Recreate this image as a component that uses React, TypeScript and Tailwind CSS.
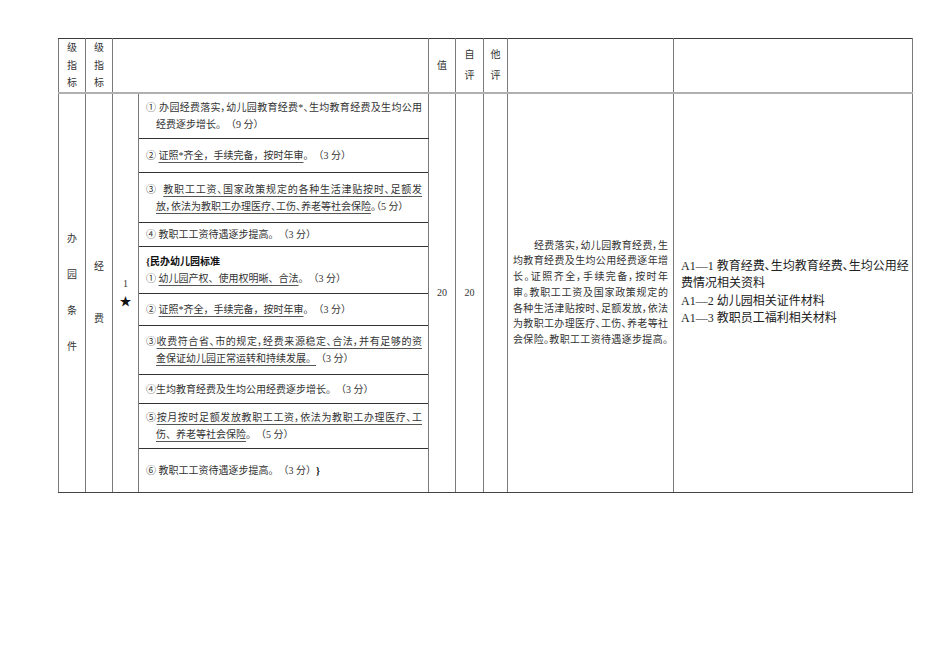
import React from "react";

const G = "border-l border-r border-t border-b border-l-[#7a7a7a] border-r-[#7a7a7a]";
const HD = `${G} border-t-[#3a3a3a] border-b-2 border-b-[#b0b0b0] p-0 align-middle text-center`;
const BD = `${G} border-b-[#444] p-0 align-middle`;
const SUB = `${G} border-t-[#333] border-b-[#333] pl-[7px] pr-[6px] py-0 align-middle leading-[17px] text-[10px]`;
const U = "underline underline-offset-[3px] decoration-[#555]";
const J = "whitespace-nowrap [text-align-last:justify] text-justify [font-feature-settings:'palt']";
const L = "whitespace-nowrap";
const L2 = "whitespace-nowrap pl-[10px]";

export default function App() {
  return (
    <div className="w-[950px] h-[672px] bg-white pt-[38px] pl-[58px] font-['Liberation_Serif','Noto_Sans_CJK_SC',serif] text-[#333] [text-spacing-trim:space-all]">
      <table className="border-collapse table-fixed w-[854px] text-[10px]">
        <colgroup>
          <col className="w-[27px]" />
          <col className="w-[27px]" />
          <col className="w-[26px]" />
          <col className="w-[290px]" />
          <col className="w-[27px]" />
          <col className="w-[28px]" />
          <col className="w-[24px]" />
          <col className="w-[166px]" />
          <col className="w-[239px]" />
        </colgroup>
        <tbody>
          <tr className="h-[53px]">
            <td className={HD}>
              <div className="flex flex-col items-center leading-[17.5px]">
                <span>级</span>
                <span>指</span>
                <span>标</span>
              </div>
            </td>
            <td className={HD}>
              <div className="flex flex-col items-center leading-[17.5px]">
                <span>级</span>
                <span>指</span>
                <span>标</span>
              </div>
            </td>
            <td className={HD} colSpan={2}></td>
            <td className={HD}>值</td>
            <td className={HD}>
              <div className="flex flex-col items-center leading-[21px]">
                <span>自</span>
                <span>评</span>
              </div>
            </td>
            <td className={HD}>
              <div className="flex flex-col items-center leading-[21px]">
                <span>他</span>
                <span>评</span>
              </div>
            </td>
            <td className={HD}></td>
            <td className={HD}></td>
          </tr>

          <tr className="h-[46px]">
            <td className={BD} rowSpan={10}>
              <div className="flex flex-col items-center gap-[22px] leading-[14px]">
                <span>办</span>
                <span>园</span>
                <span>条</span>
                <span>件</span>
              </div>
            </td>
            <td className={BD} rowSpan={10}>
              <div className="flex flex-col items-center gap-[38px] leading-[14px]">
                <span>经</span>
                <span>费</span>
              </div>
            </td>
            <td className={BD} rowSpan={10}>
              <div className="flex flex-col items-center leading-[19px]">
                <span>1</span>
                <span className="text-[12px] text-[#111]">★</span>
              </div>
            </td>
            <td className={SUB}>
              <div className={J}>① 办园经费落实，幼儿园教育经费*、生均教育经费及生均公用</div>
              <div className={L2}>经费逐步增长。（9 分）</div>
            </td>
            <td className={`${BD} text-center`} rowSpan={10}>20</td>
            <td className={`${BD} text-center`} rowSpan={10}>20</td>
            <td className={BD} rowSpan={10}></td>
            <td className={`${BD} px-[5px] text-[10px] leading-[15.7px]`} rowSpan={10}>
              <div className={`${J} pl-[21px]`}>经费落实，幼儿园教育经费，生</div>
              <div className={J}>均教育经费及生均公用经费逐年增</div>
              <div className={J}>长。证照齐全，手续完备，按时年</div>
              <div className={J}>审。教职工工资及国家政策规定的</div>
              <div className={J}>各种生活津贴按时、足额发放，依法</div>
              <div className={J}>为教职工办理医疗、工伤、养老等社</div>
              <div className={J}>会保险。教职工工资待遇逐步提高。</div>
            </td>
            <td className={`${BD} pl-[7px] pr-[4px] text-[12px] leading-[17.3px] text-[#222]`} rowSpan={10}>
              <div className={J}>A1—1 教育经费、生均教育经费、生均公用经</div>
              <div className={L}>费情况相关资料</div>
              <div className={L}>A1—2 幼儿园相关证件材料</div>
              <div className={L}>A1—3 教职员工福利相关材料</div>
            </td>
          </tr>

          <tr className="h-[34px]">
            <td className={SUB}>
              <div className={L}>
                ② <span className={U}>证照*齐全，手续完备，按时年审</span>。（3 分）
              </div>
            </td>
          </tr>

          <tr className="h-[50px]">
            <td className={SUB}>
              <div className={J}>
                ③&nbsp; <span className={U}>教职工工资、国家政策规定的各种生活津贴按时、足额发</span>
              </div>
              <div className={`${L2} [font-feature-settings:'palt']`}>
                <span className={U}>放，依法为教职工办理医疗、工伤、养老等社会保险</span>。（5 分）
              </div>
            </td>
          </tr>

          <tr className="h-[24px]">
            <td className={SUB}>
              <div className={L}>④ 教职工工资待遇逐步提高。（3 分）</div>
            </td>
          </tr>

          <tr className="h-[47px]">
            <td className={SUB}>
              <div className={`${L} font-bold text-[#111]`}>{"{"}民办幼儿园标准</div>
              <div className={L}>
                ① <span className={U}>幼儿园产权、使用权明晰、合法</span>。（3 分）
              </div>
            </td>
          </tr>

          <tr className="h-[32px]">
            <td className={SUB}>
              <div className={L}>
                ② <span className={U}>证照*齐全，手续完备，按时年审</span>。（3 分）
              </div>
            </td>
          </tr>

          <tr className="h-[49px]">
            <td className={SUB}>
              <div className={J}>
                ③<span className={U}>收费符合省、市的规定，经费来源稳定、合法，并有足够的资</span>
              </div>
              <div className={L2}>
                <span className={U}>金保证幼儿园正常运转和持续发展。</span>（3 分）
              </div>
            </td>
          </tr>

          <tr className="h-[29px]">
            <td className={SUB}>
              <div className={L}>④生均教育经费及生均公用经费逐步增长。（3 分）</div>
            </td>
          </tr>

          <tr className="h-[45px]">
            <td className={SUB}>
              <div className={J}>
                ⑤<span className={U}>按月按时足额发放教职工工资，依法为教职工办理医疗、工</span>
              </div>
              <div className={L2}>
                <span className={U}>伤、养老等社会保险</span>。（5 分）
              </div>
            </td>
          </tr>

          <tr className="h-[44px]">
            <td className={`${SUB} border-b-[#444]`}>
              <div className={L}>
                ⑥ 教职工工资待遇逐步提高。（3 分）<span className="font-bold text-[#111]">{"}"}</span>
              </div>
            </td>
          </tr>
        </tbody>
      </table>
    </div>
  );
}
